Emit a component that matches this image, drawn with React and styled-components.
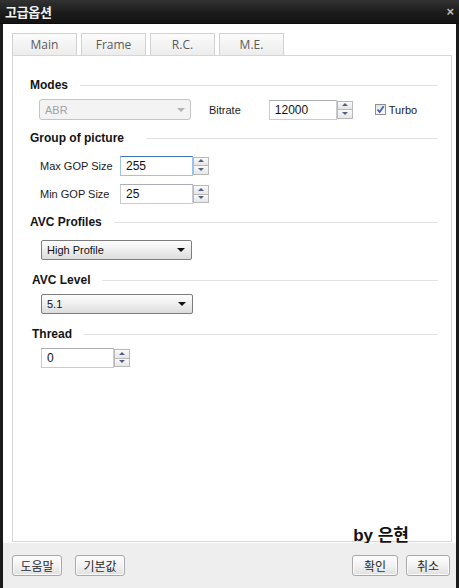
import React from 'react';
import styled, { createGlobalStyle } from 'styled-components';

const GlobalStyle = createGlobalStyle`
    html, body {
        margin: 0;
        padding: 0;
        background: #1b1b1b;
    }
    body {
        font-family: "Liberation Sans", Arial, "Noto Sans CJK KR", sans-serif;
    }
`;

const Window = styled.div`
    width: 459px;
    height: 588px;
    display: flex;
    flex-direction: column;
    background: #1b1b1b;
    overflow: hidden;
`;

const TitleBar = styled.div`
    height: 24px;
    flex-shrink: 0;
    display: flex;
    align-items: center;
    justify-content: space-between;
    padding: 0 5px 0 5px;
    background: linear-gradient(#323232, #1a1a1a 60%, #141414);
    border-bottom: 1px solid #0c0c0c;
    box-sizing: border-box;
`;

const Title = styled.span`
    color: #f2f2f2;
    font-family: "Noto Sans CJK KR", sans-serif;
    font-weight: bold;
    font-size: 13px;
    letter-spacing: -0.3px;
`;

const CloseMark = styled.span`
    color: #bdbdbd;
    font-size: 13px;
    font-weight: bold;
    line-height: 1;
`;

const Frame = styled.div`
    flex: 1;
    display: flex;
    padding: 0 3px 0 3px;
`;

const Client = styled.div`
    flex: 1;
    display: flex;
    flex-direction: column;
    background: #fff;
`;

const TabArea = styled.div`
    flex: 1;
    display: flex;
    flex-direction: column;
    padding: 9px 4px 0 9px;
`;

const TabStrip = styled.div`
    display: flex;
    gap: 4px;
    height: 22px;
`;

const Tab = styled.div`
    width: 65px;
    box-sizing: border-box;
    display: flex;
    align-items: center;
    justify-content: center;
    border: 1px solid #d2d2d2;
    border-bottom: none;
    background: linear-gradient(#fbfbfb, #ececec);
    color: #5a5a5a;
    font-size: 12px;
    font-family: "Open Sans", "Liberation Sans", sans-serif;
`;

const Panel = styled.div`
    flex: 1;
    display: flex;
    flex-direction: column;
    border: 1px solid #d6d6d6;
    padding: 21px 13px 0 17px;
`;

const Heading = styled.div`
    display: flex;
    align-items: center;
    height: 16px;
    margin-left: ${p => p.$indent || 0}px;
    margin-top: ${p => p.$top || 0}px;
    font-size: 12px;
    font-weight: bold;
    color: #141414;
    white-space: nowrap;

    &::after {
        content: '';
        flex: 1;
        height: 1px;
        margin-left: ${p => p.$gap || 12}px;
        background: #e2e2e2;
    }
`;

const Row = styled.div`
    display: flex;
    align-items: center;
    margin-left: ${p => p.$indent || 0}px;
    margin-top: ${p => p.$top || 0}px;
    height: ${p => p.$height || 20}px;
`;

const Label = styled.span`
    font-size: 11px;
    color: #1a1a1a;
    width: ${p => (p.$width ? `${p.$width}px` : 'auto')};
    margin-left: ${p => p.$left || 0}px;
    flex-shrink: 0;
`;

const Select = styled.div`
    position: relative;
    width: ${p => p.$width}px;
    height: ${p => p.$height || 20}px;
    box-sizing: border-box;
    display: flex;
    align-items: center;
    padding-left: 5px;
    font-size: 11px;
    border-radius: ${p => (p.$disabled ? 3 : 2)}px;
    border: 1px solid ${p => (p.$disabled ? '#c4c4c4' : '#7d7d7d')};
    background: ${p => (p.$disabled ? '#f3f3f3' : 'linear-gradient(#fdfdfd, #f0f0f0 45%, #dcdcdc)')};
    color: ${p => (p.$disabled ? '#a2a2a2' : '#111')};

    &::after {
        content: '';
        position: absolute;
        right: ${p => (p.$disabled ? 5 : 6)}px;
        top: 50%;
        margin-top: -2px;
        border-left: 4px solid transparent;
        border-right: 4px solid transparent;
        border-top: 4px solid ${p => (p.$disabled ? '#b4b4b4' : '#111')};
    }
`;

const SpinBox = styled.div`
    display: flex;
    width: ${p => p.$width}px;
    height: ${p => p.$height || 20}px;
    margin-left: ${p => p.$left || 0}px;
    flex-shrink: 0;
`;

const SpinField = styled.div`
    flex: 1;
    box-sizing: border-box;
    display: flex;
    align-items: center;
    padding-left: 5px;
    font-size: 12px;
    color: #111;
    background: #fff;
    border: 1px solid ${p => (p.$focused ? '#9fc3e8' : '#c9cbcf')};
    border-top-color: ${p => (p.$focused ? '#3f78b8' : '#abadb3')};
`;

const SpinButtons = styled.div`
    width: 16px;
    display: flex;
    flex-direction: column;
    padding: 1px 0;
    box-sizing: border-box;
`;

const SpinButton = styled.div`
    flex: 1;
    position: relative;
    border: 1px solid #b9b9b9;
    ${p => (p.$down ? 'border-top: none;' : '')}
    background: linear-gradient(#fafafa, #e6e6e6);

    &::after {
        content: '';
        position: absolute;
        left: 50%;
        top: 50%;
        margin-left: -3px;
        margin-top: -2px;
        border-left: 3px solid transparent;
        border-right: 3px solid transparent;
        ${p => (p.$down ? 'border-top: 3px solid #4d6185;' : 'border-bottom: 3px solid #4d6185;')}
    }
`;

const CheckBox = styled.span`
    width: 11px;
    height: 11px;
    box-sizing: border-box;
    margin-left: 22px;
    border: 1px solid #8f8f8f;
    background: linear-gradient(#e4e4e4, #fafafa);
    display: flex;
    align-items: center;
    justify-content: center;
    flex-shrink: 0;
`;

const Signature = styled.div`
    margin-top: auto;
    align-self: flex-end;
    margin-right: 29px;
    margin-bottom: -3px;
    font-family: "Liberation Sans", "Noto Sans CJK KR", sans-serif;
    font-weight: bold;
    font-size: 17px;
    line-height: 1;
    color: #111;
`;

const Footer = styled.div`
    height: 45px;
    flex-shrink: 0;
    display: flex;
    align-items: center;
    padding: 0 6px 0 9px;
    margin-top: 1px;
    background: #eeeeee;
    gap: 13px;
`;

const Spacer = styled.div`
    flex: 1;
`;

const Button = styled.button`
    width: ${p => p.$width || 50}px;
    height: 21px;
    padding: 0;
    margin-left: ${p => p.$left || 0}px;
    border: 1px solid #a9a9a9;
    border-radius: 3px;
    background: linear-gradient(#fefefe, #f2f2f2 50%, #e0e0e0);
    box-shadow: inset 0 0 0 1px #fbfbfb;
    font-family: "Noto Sans CJK KR", sans-serif;
    font-size: 12px;
    color: #2a2a2a;
`;

function Spin({ value, width, focused, left }) {
    return (
        <SpinBox $width={width} $left={left}>
            <SpinField $focused={focused}>{value}</SpinField>
            <SpinButtons>
                <SpinButton />
                <SpinButton $down />
            </SpinButtons>
        </SpinBox>
    );
}

const tabs = ['Main', 'Frame', 'R.C.', 'M.E.'];

export default function App() {
    return (
        <Window>
            <GlobalStyle />
            <TitleBar>
                <Title>고급옵션</Title>
                <CloseMark>×</CloseMark>
            </TitleBar>
            <Frame>
                <Client>
                    <TabArea>
                        <TabStrip>
                            {tabs.map(t => <Tab key={t}>{t}</Tab>)}
                        </TabStrip>
                        <Panel>
                            <Heading>Modes</Heading>
                            <Row $indent={9} $top={6} $height={21}>
                                <Select $width={152} $height={21} $disabled>ABR</Select>
                                <Label $left={18}>Bitrate</Label>
                                <Spin value="12000" width={84} left={28} />
                                <CheckBox>
                                    <svg width="9" height="9" viewBox="0 0 9 9">
                                        <path d="M1.5 4.5 L3.6 7 L7.6 1.2" fill="none" stroke="#3a62b0" strokeWidth="1.7" />
                                    </svg>
                                </CheckBox>
                                <Label $left={3}>Turbo</Label>
                            </Row>

                            <Heading $top={10} $gap={22}>Group of picture</Heading>
                            <Row $indent={10} $top={9} $height={21}>
                                <Label $width={80}>Max GOP Size</Label>
                                <Spin value="255" width={89} focused />
                            </Row>
                            <Row $indent={10} $top={8}>
                                <Label $width={80}>Min GOP Size</Label>
                                <Spin value="25" width={89} />
                            </Row>

                            <Heading $top={10}>AVC Profiles</Heading>
                            <Row $indent={11} $top={10}>
                                <Select $width={151}>High Profile</Select>
                            </Row>

                            <Heading $indent={2} $top={12}>AVC Level</Heading>
                            <Row $indent={11} $top={6}>
                                <Select $width={152}>5.1</Select>
                            </Row>

                            <Heading $indent={2} $top={12}>Thread</Heading>
                            <Row $indent={11} $top={6}>
                                <Spin value="0" width={89} />
                            </Row>

                            <Signature>by 은현</Signature>
                        </Panel>
                    </TabArea>
                    <Footer>
                        <Button>도움말</Button>
                        <Button>기본값</Button>
                        <Spacer />
                        <Button $width={46}>확인</Button>
                        <Button $width={44} $left={-5}>취소</Button>
                    </Footer>
                </Client>
            </Frame>
        </Window>
    );
}
